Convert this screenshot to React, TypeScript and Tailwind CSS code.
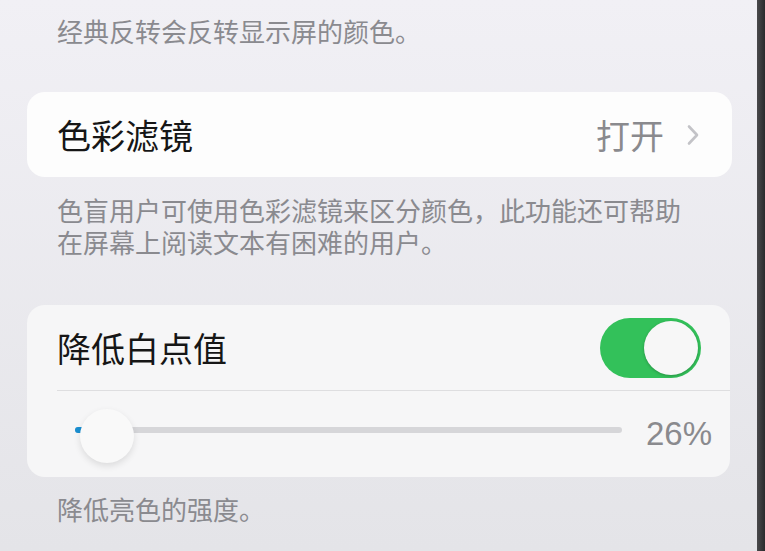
import React from 'react';

const cjk = { fontFamily: '"Noto Sans CJK SC", "Noto Sans", sans-serif' };

/* ------------------------------ Small parts ------------------------------ */

const Chevron: React.FC = () => (
  <svg width="14" height="22" viewBox="0 0 14 22" fill="none">
    <path d="M3 2.5 L11 11 L3 19.5" stroke="#c3c3c7" strokeWidth="2.6" strokeLinecap="round" strokeLinejoin="round" />
  </svg>
);

const Toggle: React.FC = () => (
  <div className="w-[101px] h-[60px] rounded-full bg-[#33c15a] flex items-center justify-end pr-[3px]">
    <div className="w-[54px] h-[54px] rounded-full bg-[#f7f7f7] shadow-[0_1px_3px_rgba(0,0,0,0.25)]" />
  </div>
);

const Slider: React.FC = () => (
  <div className="flex-1 relative h-[54px] flex items-center">
    <div className="w-full h-[6px] rounded-full bg-[#d6d6d9] -mt-[8px]" />
    <div className="absolute left-0 top-[20px] w-[32px] h-[6px] rounded-full bg-[#1a8fd1]" />
    <div className="absolute left-[5px] top-[2px] w-[54px] h-[54px] rounded-full bg-[#f9f9f9] shadow-[0_3px_7px_rgba(0,0,0,0.11)]" />
  </div>
);

/* --------------------------------- Page --------------------------------- */

export default function App() {
  return (
    <div className="w-[765px] h-[551px] overflow-hidden flex bg-gradient-to-b from-[#f1f0f5] to-[#e4e4e8]" style={cjk}>
      <div className="flex-1 flex flex-col px-[27px] pt-[15px]">
        <p className="pl-[30px] text-[26px] leading-[31px] text-[#8a8a8f]">经典反转会反转显示屏的颜色。</p>

        {/* Color filters */}
        <div className="mt-[46px] h-[85px] rounded-[18px] bg-[#fdfdfd] flex items-center pl-[30px] pr-[32px] mr-[-2px]">
          <span className="flex-1 text-[34px] text-[#161616]">色彩滤镜</span>
          <span className="text-[34px] text-[#8a8a8e] mr-[22px]">打开</span>
          <Chevron />
        </div>

        <p className="mt-[17px] pl-[30px] text-[26px] leading-[32px] text-[#8a8a8f]">
          色盲用户可使用色彩滤镜来区分颜色，此功能还可帮助
          <br />
          在屏幕上阅读文本有困难的用户。
        </p>

        {/* Reduce white point */}
        <div className="mt-[47px] rounded-[18px] bg-[#f6f6f7] flex flex-col">
          <div className="h-[85px] flex items-center pl-[30px] pr-[29px]">
            <span className="flex-1 text-[34px] text-[#161616]">降低白点值</span>
            <Toggle />
          </div>
          <div className="ml-[30px] h-px bg-[#dedee0]" />
          <div className="h-[86px] flex items-center pl-[48px] pr-[18px] gap-[24px]">
            <Slider />
            <span className="text-[33px] text-[#8a8a8e]" style={{ fontFamily: '"Liberation Sans", Arial, sans-serif' }}>26%</span>
          </div>
        </div>

        <p className="mt-[16px] pl-[30px] text-[26px] leading-[31px] text-[#8a8a8f]">降低亮色的强度。</p>
      </div>
      <div className="w-[8px] h-full bg-gradient-to-r from-[#4a4a4c] to-[#2a2a2c]" />
    </div>
  );
}
